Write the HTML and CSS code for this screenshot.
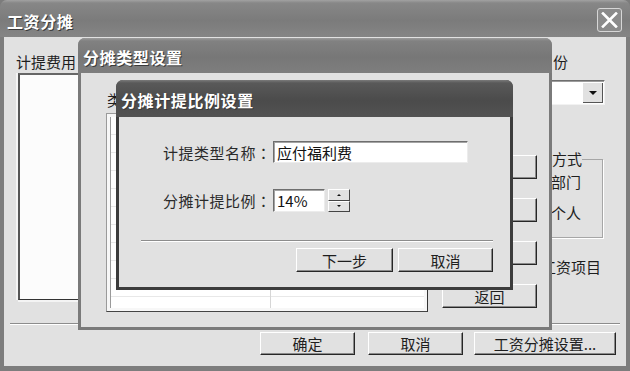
FILE: index.html
```html
<!DOCTYPE html>
<html lang="zh">
<head>
  <meta charset="UTF-8">
  <title>工资分摊</title>
<link rel="stylesheet" href="styles.css">
</head>
<body>
  <div class="desktop">

    <!-- 主窗口：工资分摊 -->
    <div class="win win-main">
      <div class="titlebar">
        <span>工资分摊</span>
        <span class="close-btn">
          <svg width="17" height="16" viewBox="0 0 17 16"><path d="M2 1.5 L15 14.5 M15 1.5 L2 14.5" stroke="#fff" stroke-width="2.6" stroke-linecap="square"/></svg>
        </span>
      </div>
      <div class="win-body main-body">
        <div class="main-top">
          <div class="col-left">
            <div class="label">计提费用</div>
            <div class="listbox"></div>
          </div>
          <div class="col-right">
            <div class="label">计提月份</div>
            <div class="combo">
              <span class="combo-btn"><i class="arrow-down"></i></span>
            </div>
            <fieldset class="group">
              <legend>分摊方式</legend>
              <div class="radio first">按部门</div>
              <div class="radio">按个人</div>
            </fieldset>
            <div class="label items">选择工资项目</div>
          </div>
        </div>
        <div class="sep"></div>
        <div class="btn-row">
          <button class="btn btn-ok">确定</button>
          <button class="btn btn-cancel">取消</button>
          <button class="btn btn-setup">工资分摊设置...</button>
        </div>
      </div>
    </div>

    <!-- 分摊类型设置 -->
    <div class="win win-type">
      <div class="titlebar">
        <span>分摊类型设置</span>
      </div>
      <div class="win-body type-body">
        <div class="type-left">
          <div class="label">类</div>
          <div class="type-list">
            <div class="grid"></div>
          </div>
        </div>
        <div class="type-actions">
          <button class="btn">增加</button>
          <button class="btn">修改</button>
          <button class="btn">删除</button>
          <button class="btn">返回</button>
        </div>
      </div>
    </div>

    <!-- 分摊计提比例设置 -->
    <div class="win win-ratio">
      <div class="titlebar">
        <span>分摊计提比例设置</span>
      </div>
      <div class="win-body ratio-body">
        <div class="form-row row-name">
          <span class="field-label">计提类型名称<span class="colon" lang="zh-TW">：</span></span>
          <span class="textbox tb-name">应付福利费</span>
        </div>
        <div class="form-row row-rate">
          <span class="field-label">分摊计提比例<span class="colon" lang="zh-TW">：</span></span>
          <span class="textbox tb-rate">14%</span>
          <span class="spin">
            <span class="spin-half"><i class="arrow-up-s"></i></span>
            <span class="spin-half"><i class="arrow-down-s"></i></span>
          </span>
        </div>
        <div class="sep ratio-sep"></div>
        <div class="ratio-actions">
          <button class="btn btn-next">下一步</button>
          <button class="btn">取消</button>
        </div>
      </div>
    </div>

  </div>
</body>
</html>
```

FILE: styles.css
```css
html, body {
  margin: 0;
  padding: 0;
  background: #7c7c7c;
  font-family: "Noto Sans CJK SC", "Noto Sans", sans-serif;
  font-size: 15px;
  color: #1e1e1e;
}

.desktop {
  position: relative;
  width: 630px;
  height: 371px;
  overflow: hidden;
}

/* 窗口通用 */
.win {
  position: absolute;
  display: flex;
  flex-direction: column;
  box-sizing: border-box;
}

.win-main {
  left: 0;
  top: 0;
  width: 630px;
  height: 371px;
  background: #7d7d7d;
  border-radius: 7px 7px 0 0;
}

.win-type {
  left: 78px;
  top: 38px;
  width: 474px;
  height: 292px;
  background: #7a7a7a;
  border-radius: 7px 7px 0 0;
}

.win-ratio {
  left: 116px;
  top: 80px;
  width: 397px;
  height: 210px;
  background: #3c3c3c;
  border-radius: 7px 7px 0 0;
}

.titlebar {
  flex: none;
  display: flex;
  align-items: center;
  justify-content: space-between;
  box-sizing: border-box;
  color: #fff;
  font-size: 16px;
  font-weight: bold;
  letter-spacing: 0.6px;
  text-shadow: 1px 1px 0 #3a3a3a;
  border-radius: 7px 7px 0 0;
}

.win-main .titlebar {
  height: 37px;
  padding: 5px 8px 0 7px;
  background: linear-gradient(#a2a2a2, #878787 3px, #7b7b7b 55%, #858585);
}

.win-type .titlebar {
  height: 35px;
  padding: 3px 0 0 5px;
  background: linear-gradient(#9c9c9c, #818181 3px, #777 55%, #7e7e7e);
}

.win-ratio .titlebar {
  height: 37px;
  padding: 3px 0 0 5px;
  background: linear-gradient(#7a7a7a, #595959 3px, #4b4b4b 55%, #525252);
}

.close-btn {
  display: flex;
  align-items: center;
  justify-content: center;
  width: 25px;
  height: 24px;
  margin-top: -3px;
  box-sizing: border-box;
  border: 1px solid #d6d6d6;
  border-radius: 3px;
  background: #8b8b8b;
}

.win-body {
  flex: 1;
  background: #e1e1e1;
  margin: 0 3px 3px;
}

.win-main .win-body {
  margin: 0 4px 5px;
}

.label {
  line-height: 18px;
  white-space: nowrap;
}

/* 按钮 */
.btn {
  box-sizing: border-box;
  display: flex;
  align-items: center;
  justify-content: center;
  height: 23px;
  padding: 0;
  font: inherit;
  color: #1e1e1e;
  background: #e1e1e1;
  border: 1px solid;
  border-color: #fff #262626 #262626 #fff;
  box-shadow: inset -1px -1px 0 #8a8a8a;
}

.sep {
  height: 0;
  border-top: 1px solid #8c8c8c;
  border-bottom: 1px solid #fff;
}

/* 主窗口内容 */
.main-body {
  display: flex;
  flex-direction: column;
  padding: 0 6px;
}

.main-top {
  height: 286px;
  display: flex;
  justify-content: space-between;
}

.col-left {
  padding-left: 6px;
}

.col-left .label {
  margin-top: 16px;
}

.listbox {
  margin: 2px 0 0 2px;
  width: 200px;
  height: 227px;
  box-sizing: border-box;
  background: #fcfcfc;
  border-left: 2px solid #555;
  border-top: 2px solid #666;
  border-bottom: 1px solid #333;
  box-shadow: 0 2px 0 #f4f4f4, -2px 0 0 #f4f4f4;
}

.col-right {
  width: 100px;
  margin-right: 12px;
}

.col-right .label {
  margin-top: 16px;
}

.combo {
  display: flex;
  margin: 9px 0 0 40px;
  width: 57px;
  height: 25px;
  box-sizing: border-box;
  background: #fff;
  border: 1px solid;
  border-color: #6e6e6e #f2f2f2 #f2f2f2 #6e6e6e;
  box-shadow: inset 1px 1px 0 #9c9c9c;
}

.combo-btn {
  margin: 2px 1px 1px auto;
  width: 19px;
  display: flex;
  align-items: center;
  justify-content: center;
  background: #e1e1e1;
  border-right: 1px solid #555;
  border-bottom: 1px solid #555;
}

.arrow-down {
  width: 0;
  height: 0;
  border-left: 4px solid transparent;
  border-right: 4px solid transparent;
  border-top: 4px solid #111;
}

fieldset.group {
  margin: 45px 0 0 12px;
  width: 83px;
  min-width: 0;
  box-sizing: border-box;
  padding: 0 0 15px 1px;
  border: 1px solid #a6a6a6;
  box-shadow: 1px 1px 0 #fff;
}

fieldset.group legend {
  padding: 0;
  line-height: 18px;
  white-space: nowrap;
}

.radio {
  margin: 13px 0 0 14px;
  line-height: 18px;
  white-space: nowrap;
}

.radio.first {
  margin-top: 5px;
}

.col-right .label.items {
  margin-top: 20px;
  padding-left: 3px;
}

.btn-row {
  display: flex;
  justify-content: flex-end;
  margin-top: 7px;
  padding-right: 4px;
}

.btn-ok,
.btn-cancel {
  width: 95px;
}

.btn-cancel {
  margin-left: 13px;
}

.btn-setup {
  width: 142px;
  margin-left: 11px;
}

/* 分摊类型设置 */
.type-body {
  display: flex;
  justify-content: space-between;
}

.type-left {
  padding-left: 25px;
}

.type-left .label {
  margin: 18px 0 0 1px;
}

.type-list {
  margin-top: 4px;
  width: 322px;
  height: 199px;
  box-sizing: border-box;
  padding: 3px;
  background: #f7f7f7;
  border: 1px solid;
  border-color: #9a9a9a #333 #444 #9a9a9a;
}

.grid {
  height: 100%;
  box-sizing: border-box;
  border-left: 1px solid #9a9a9a;
  background:
    linear-gradient(to right, transparent 159px, #d6d6d6 159px, #d6d6d6 160px, transparent 160px),
    repeating-linear-gradient(#fff 0, #fff 17px, #e8e8e8 17px, #e8e8e8 18px);
}

.type-actions {
  display: flex;
  flex-direction: column;
  gap: 19px;
  padding-top: 82px;
  margin-right: 12px;
}

.type-actions .btn {
  width: 95px;
  height: 24px;
}

/* 分摊计提比例设置 */
.form-row {
  display: flex;
  align-items: center;
  padding-left: 44px;
}

.row-name {
  margin-top: 24px;
}

.row-rate {
  margin-top: 26px;
}

.field-label {
  width: 108px;
  margin-right: 2px;
  color: #2a2a2a;
  letter-spacing: 0.5px;
  white-space: nowrap;
}

.colon {
  font-family: "Noto Sans CJK TC", "Noto Sans CJK JP", sans-serif;
}

.textbox {
  display: flex;
  align-items: center;
  box-sizing: border-box;
  height: 22px;
  padding-left: 3px;
  background: #fff;
  border: 1px solid;
  border-color: #6e6e6e #ececec #ececec #6e6e6e;
  box-shadow: inset 1px 1px 0 #a4a4a4;
  color: #111;
}

.tb-name {
  width: 195px;
}

.tb-rate {
  width: 52px;
  height: 23px;
}

.spin {
  display: flex;
  flex-direction: column;
  margin-left: 3px;
  width: 22px;
  height: 23px;
}

.spin-half {
  flex: 1;
  display: flex;
  align-items: center;
  justify-content: center;
  background: #e1e1e1;
  border: 1px solid;
  border-color: #fff #444 #444 #fff;
}

.arrow-up-s,
.arrow-down-s {
  width: 0;
  height: 0;
  border-left: 2px solid transparent;
  border-right: 2px solid transparent;
}

.arrow-up-s {
  border-bottom: 2px solid #111;
}

.arrow-down-s {
  border-top: 2px solid #111;
}

.ratio-sep {
  margin: 28px 17px 0 22px;
}

.ratio-actions {
  display: flex;
  justify-content: flex-end;
  gap: 5px;
  margin-top: 6px;
  padding-right: 17px;
}

.ratio-actions .btn {
  width: 95px;
  height: 24px;
}

.ratio-actions .btn-next {
  width: 97px;
}
```
